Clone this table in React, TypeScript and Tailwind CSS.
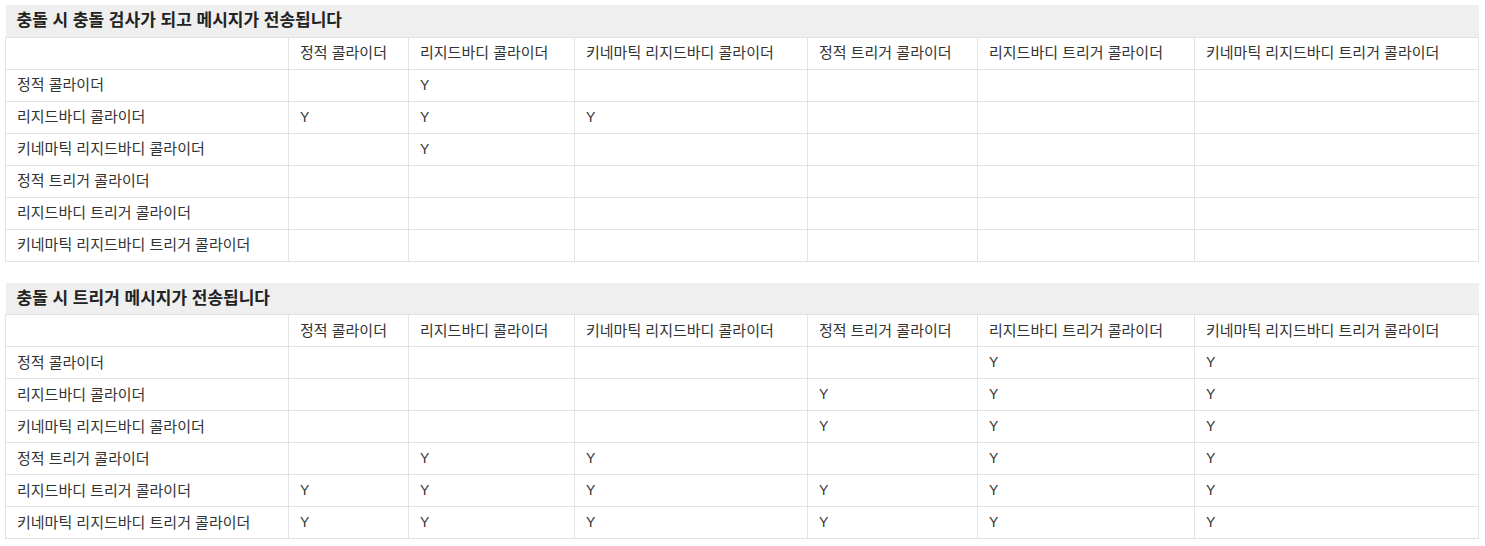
const HEADS = [
  "정적 콜라이더",
  "리지드바디 콜라이더",
  "키네마틱 리지드바디 콜라이더",
  "정적 트리거 콜라이더",
  "리지드바디 트리거 콜라이더",
  "키네마틱 리지드바디 트리거 콜라이더",
];

const COL_W = [283, 120, 166, 233, 170, 217, 284];

const COLLISION = [
  [0, 1, 0, 0, 0, 0],
  [1, 1, 1, 0, 0, 0],
  [0, 1, 0, 0, 0, 0],
  [0, 0, 0, 0, 0, 0],
  [0, 0, 0, 0, 0, 0],
  [0, 0, 0, 0, 0, 0],
];

const TRIGGER = [
  [0, 0, 0, 0, 1, 1],
  [0, 0, 0, 1, 1, 1],
  [0, 0, 0, 1, 1, 1],
  [0, 1, 1, 0, 1, 1],
  [1, 1, 1, 1, 1, 1],
  [1, 1, 1, 1, 1, 1],
];

function Matrix({ title, data }: { title: string; data: number[][] }) {
  return (
    <table className="w-[1473px] table-fixed border-collapse text-[15px] leading-none text-[#333]">
      <colgroup>
        {COL_W.map((w, i) => (
          <col key={i} style={{ width: w }} />
        ))}
      </colgroup>
      <thead>
        <tr>
          <th
            colSpan={7}
            className="h-[32px] bg-[#efefef] pl-[11px] text-left align-middle text-[17px] font-bold text-[#222]"
          >
            {title}
          </th>
        </tr>
        <tr>
          <th className="h-[32px] border border-[#e3e3e3] pb-px pl-[11px] text-left font-normal" />
          {HEADS.map((h) => (
            <th key={h} className="h-[32px] border border-[#e3e3e3] pb-px pl-[11px] text-left font-normal">
              {h}
            </th>
          ))}
        </tr>
      </thead>
      <tbody>
        {data.map((row, r) => (
          <tr key={r}>
            <td className="h-[32px] border border-[#e3e3e3] pb-px pl-[11px]">{HEADS[r]}</td>
            {row.map((v, c) => (
              <td key={c} className="h-[32px] border border-[#e3e3e3] pb-px pl-[11px] text-[14px]">
                {v ? "Y" : ""}
              </td>
            ))}
          </tr>
        ))}
      </tbody>
    </table>
  );
}

export default function App() {
  return (
    <div
      className="flex min-h-[546px] flex-col gap-[21px] bg-white pl-[5px] pt-[5px]"
      style={{ fontFamily: '"Liberation Sans", "Noto Sans CJK KR", sans-serif' }}
    >
      <Matrix title="충돌 시 충돌 검사가 되고 메시지가 전송됩니다" data={COLLISION} />
      <Matrix title="충돌 시 트리거 메시지가 전송됩니다" data={TRIGGER} />
    </div>
  );
}
